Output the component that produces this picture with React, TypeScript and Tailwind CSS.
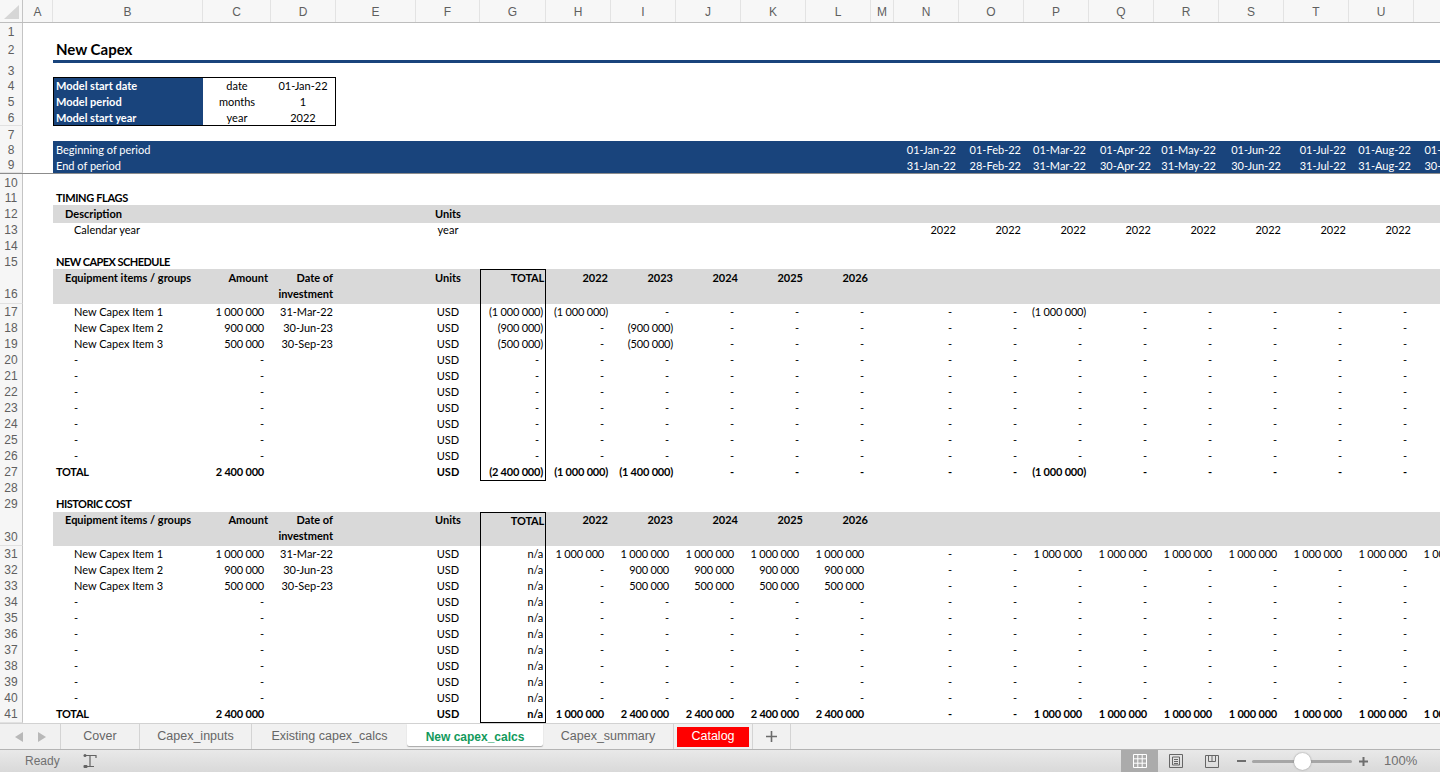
const cellBase = "h-full whitespace-nowrap leading-[16px] min-w-0";

const letters = ["A","B","C","D","E","F","G","H","I","J","K","L","M","N","O","P","Q","R","S","T","U","V"];

type Align = "l" | "c" | "r";
type Cell = { t?: string; a?: Align; pr?: string; pl?: string; cls?: string; sub?: string };
type RowData = {
  n: number;
  h: string;
  fill?: string;
  color?: string;
  bold?: boolean;
  shift?: boolean;
  fixed?: boolean;
  cells?: Record<string, Cell>;
  extra?: string;
};

const DASH = "-";
const tight = "tracking-[-0.2px]";

// accounting style number: positives and dashes sit in from the right, brackets reach the edge
function num(v: string): Cell {
  if (v === DASH) return { t: v, a: "r", pr: "pr-[7px]" };
  if (v.startsWith("(")) return { t: v, a: "r", pr: "pr-[3px]", cls: tight };
  return { t: v, a: "r", pr: "pr-[7px]", cls: tight };
}

const months = ["N","O","P","Q","R","S","T","U","V"];
const years = ["H","I","J","K","L"];

function fillCols(cols: string[], vals: string[]) {
  const out: Record<string, Cell> = {};
  cols.forEach((c, i) => {
    out[c] = num(vals[i] ?? DASH);
  });
  return out;
}

function totalCell(v: string): Cell {
  if (v === DASH) return { t: v, a: "r", pr: "pr-[6px]" };
  return { t: v, a: "r", pr: "pr-[2px]", cls: tight };
}

function dataRow(n: number, label: string, amount: string, date: string, total: string, yrs: string[], mon: string[], bold = false): RowData {
  return {
    n,
    h: "h-[16px]",
    bold,
    cells: {
      B: { t: label, pl: bold ? "pl-[3px]" : "pl-[21px]", cls: bold ? "tracking-[-0.3px]" : "" },
      C: num(amount),
      D: { t: date, a: "r", pr: "pr-[3px]" },
      F: { t: "USD", a: "c" },
      G: totalCell(total),
      ...fillCols(years, yrs),
      ...fillCols(months, mon),
    },
  };
}

const none = (k: number) => Array(k).fill(DASH) as string[];
const repeat = (v: string, k: number) => Array(k).fill(v) as string[];

const capexRows: RowData[] = [
  dataRow(17, "New Capex Item 1", "1 000 000", "31-Mar-22", "(1 000 000)", ["(1 000 000)"], [DASH, DASH, "(1 000 000)"]),
  dataRow(18, "New Capex Item 2", "900 000", "30-Jun-23", "(900 000)", [DASH, "(900 000)"], []),
  dataRow(19, "New Capex Item 3", "500 000", "30-Sep-23", "(500 000)", [DASH, "(500 000)"], []),
  ...[20, 21, 22, 23, 24, 25, 26].map((n) => dataRow(n, DASH, DASH, "", DASH, [], [])),
  dataRow(27, "TOTAL", "2 400 000", "", "(2 400 000)", ["(1 000 000)", "(1 400 000)"], [DASH, DASH, "(1 000 000)"], true),
];

const m = "1 000 000";
const historicRows: RowData[] = [
  dataRow(31, "New Capex Item 1", "1 000 000", "31-Mar-22", "n/a", repeat(m, 5), [DASH, DASH, ...repeat(m, 7)]),
  dataRow(32, "New Capex Item 2", "900 000", "30-Jun-23", "n/a", [DASH, ...repeat("900 000", 4)], []),
  dataRow(33, "New Capex Item 3", "500 000", "30-Sep-23", "n/a", [DASH, ...repeat("500 000", 4)], []),
  ...[34, 35, 36, 37, 38, 39, 40].map((n) => dataRow(n, DASH, DASH, "", "n/a", none(5), none(9))),
  dataRow(41, "TOTAL", "2 400 000", "", "n/a", [m, ...repeat("2 400 000", 4)], [DASH, DASH, ...repeat(m, 7)], true),
];

function headerCells(): Record<string, Cell> {
  const yearCells: Record<string, Cell> = {};
  ["2022", "2023", "2024", "2025", "2026"].forEach((y, i) => {
    yearCells[years[i]] = { t: y, a: "r", pr: "pr-[3px]" };
  });
  return {
    B: { t: "Equipment items / groups", pl: "pl-[12px]" },
    C: { t: "Amount", a: "r", pr: "pr-[3px]" },
    D: { t: "Date of", sub: "investment", a: "r", pr: "pr-[3px]" },
    F: { t: "Units", a: "c" },
    G: { t: "TOTAL", a: "r", pr: "pr-[1px]", cls: "tracking-[-0.2px]" },
    ...yearCells,
  };
}

const dates: [string, string][] = [
  ["01-Jan-22", "31-Jan-22"],
  ["01-Feb-22", "28-Feb-22"],
  ["01-Mar-22", "31-Mar-22"],
  ["01-Apr-22", "30-Apr-22"],
  ["01-May-22", "31-May-22"],
  ["01-Jun-22", "30-Jun-22"],
  ["01-Jul-22", "31-Jul-22"],
  ["01-Aug-22", "31-Aug-22"],
  ["01-Sep-22", "30-Sep-22"],
];

function dateCells(idx: 0 | 1): Record<string, Cell> {
  const out: Record<string, Cell> = {};
  months.forEach((c, i) => {
    out[c] = { t: dates[i][idx], a: "r", pr: "pr-[3px]" };
  });
  return out;
}

function yearFlagCells(): Record<string, Cell> {
  const out: Record<string, Cell> = {};
  months.forEach((c) => {
    out[c] = { t: "2022", a: "r", pr: "pr-[3px]" };
  });
  return out;
}

const boxL = "border-l border-black";
const blue = "bg-[#19447c]";
const gray = "bg-[#d9d9d9]";
const caps = "tracking-[-0.35px]";

const rows: RowData[] = [
  { n: 1, h: "h-[15px]" },
  { n: 2, h: "h-[24px]", bold: true, cells: { B: { t: "New Capex", pl: "pl-[3px]", cls: "text-[15px] leading-[22px]" } }, extra: "title" },
  { n: 3, h: "h-[15px]" },
  {
    n: 4, h: "h-[16px]",
    cells: {
      B: { t: "Model start date", pl: "pl-[2px]", cls: `${blue} text-white font-bold ${boxL} border-t` },
      C: { t: "date", a: "c", cls: "border-t border-black" },
      D: { t: "01-Jan-22", a: "c", cls: "border-t border-r border-black" },
    },
  },
  {
    n: 5, h: "h-[16px]", shift: true,
    cells: {
      B: { t: "Model period", pl: "pl-[2px]", cls: `${blue} text-white font-bold ${boxL}` },
      C: { t: "months", a: "c" },
      D: { t: "1", a: "c", cls: "border-r border-black" },
    },
  },
  {
    n: 6, h: "h-[17px]", shift: true, fixed: true,
    cells: {
      B: { t: "Model start year", pl: "pl-[2px]", cls: `${blue} text-white font-bold ${boxL} border-b` },
      C: { t: "year", a: "c", cls: "border-b border-black" },
      D: { t: "2022", a: "c", cls: "border-b border-r border-black" },
    },
  },
  { n: 7, h: "h-[15px]" },
  { n: 8, h: "h-[16px]", shift: true, fill: blue, color: "text-white", cells: { B: { t: "Beginning of period", pl: "pl-[3px]" }, ...dateCells(0) } },
  { n: 9, h: "h-[17px]", shift: true, fixed: true, fill: blue, color: "text-white", cells: { B: { t: "End of period", pl: "pl-[3px]" }, ...dateCells(1) }, extra: "pane" },
  { n: 10, h: "h-[15px]" },
  { n: 11, h: "h-[16px]", shift: true, bold: true, cells: { B: { t: "TIMING FLAGS", pl: "pl-[3px]", cls: caps } } },
  { n: 12, h: "h-[16px]", shift: true, bold: true, fill: gray, cells: { B: { t: "Description", pl: "pl-[12px]" }, F: { t: "Units", a: "c" } } },
  { n: 13, h: "h-[16px]", shift: true, cells: { B: { t: "Calendar year", pl: "pl-[21px]" }, F: { t: "year", a: "c" }, ...yearFlagCells() } },
  { n: 14, h: "h-[16px]" },
  { n: 15, h: "h-[16px]", shift: true, bold: true, cells: { B: { t: "NEW CAPEX SCHEDULE", pl: "pl-[3px]", cls: "tracking-[-0.55px]" } } },
  { n: 16, h: "h-[35px]", shift: true, bold: true, fill: gray, cells: headerCells(), extra: "boxTop" },
  ...capexRows.map((r, i) => ({ ...r, extra: i === capexRows.length - 1 ? "boxBottom" : "boxMid" })),
  { n: 28, h: "h-[16px]" },
  { n: 29, h: "h-[16px]", bold: true, cells: { B: { t: "HISTORIC COST", pl: "pl-[3px]", cls: "tracking-[-0.5px]" } } },
  { n: 30, h: "h-[34px]", bold: true, fill: gray, cells: headerCells(), extra: "boxTop" },
  ...historicRows.map((r, i) => ({ ...r, extra: i === historicRows.length - 1 ? "boxBottom" : "boxMid" })),
];

function SheetRow({ row }: { row: RowData }) {
  const gBorder =
    row.extra === "boxTop"
      ? "border-t border-x border-black"
      : row.extra === "boxMid"
        ? "border-x border-black"
        : row.extra === "boxBottom"
          ? "border-x border-b border-black"
          : "";
  const paneLine = row.extra === "pane" ? "border-b border-[#8c8c8c]" : "";
  const titleLine = row.extra === "title";
  const tall = row.h === "h-[35px]" || row.h === "h-[34px]";
  const numberPad = tall ? (row.n === 16 ? "pb-px" : "") : row.n < 16 && row.n !== 2 ? "pt-[2px]" : "pt-px";
  return (
    <div className={`grid grid-cols-[23px_30px_150px_68px_65px_80px_64px_66px_65px_65px_65px_65px_65px_23px_65px_65px_65px_65px_65px_65px_65px_65px_65px] w-[1479px] box-border ${row.h} ${paneLine} ${row.fixed ? "grid-rows-1" : ""}`}>
      <div className={`flex justify-center border-b border-r border-b-[#e1e1e1] border-r-[#c4c4c4] bg-[#f6f6f6] text-[12px] leading-[15px] text-[#5f5f5f] [font-family:'Liberation_Sans',sans-serif] ${tall ? "items-end" : "items-center"} ${numberPad}`}>
        {row.n}
      </div>
      {letters.map((col, i) => {
        const c = row.cells?.[col];
        const align = c?.a === "r" ? "text-right" : c?.a === "c" ? "text-center" : "text-left";
        const fill = i > 0 ? row.fill ?? "" : "";
        const g = col === "G" && row.extra === "boxTop";
        return (
          <div
            key={col}
            className={`${cellBase} ${align} ${fill} ${row.color ?? "text-black"} ${row.bold ? "font-bold" : ""} ${row.shift && !g ? "pt-px" : ""} ${c?.pr ?? ""} ${c?.pl ?? ""} ${c?.cls ?? ""} ${col === "G" ? gBorder : ""} ${titleLine && i > 0 ? "border-b-[3px] border-[#19447c]" : ""}`}
          >
            {c?.t}
            {c?.sub && <div>{c.sub}</div>}
          </div>
        );
      })}
    </div>
  );
}

function ColumnHeader() {
  return (
    <div className="grid grid-cols-[23px_30px_150px_68px_65px_80px_64px_66px_65px_65px_65px_65px_65px_23px_65px_65px_65px_65px_65px_65px_65px_65px_65px] w-[1479px] h-[23px] border-b border-[#bdbdbd] bg-[#f7f7f7] [font-family:'Liberation_Sans',sans-serif] text-[12px] text-[#5f5f5f]">
      <div className="flex items-end justify-end border-r border-[#c4c4c4] pr-[3px] pb-[3px]">
        <svg width="15" height="14" viewBox="0 0 15 14">
          <path d="M15 0V14H0Z" fill="#d6d6d6" />
        </svg>
      </div>
      {letters.map((l) => (
        <div key={l} className="flex items-center justify-center border-r border-[#e3e3e3] pt-px">
          {l}
        </div>
      ))}
    </div>
  );
}

function TabBar() {
  const tabCls = "flex items-center justify-center h-full border-r border-[#d4d4d4] text-[#666666]";
  return (
    <div className="flex h-[27px] shrink-0 border-y border-t-[#d2d2d2] border-b-[#b4b4b4] bg-[#f1f1f1] [font-family:'Liberation_Sans',sans-serif] text-[12.5px]">
      <div className="flex w-[61px] items-center justify-center gap-[15px] border-r border-[#d4d4d4]">
        <svg width="8" height="10" viewBox="0 0 8 10"><path d="M8 0V10L0 5Z" fill="#b8b8b8" /></svg>
        <svg width="8" height="10" viewBox="0 0 8 10"><path d="M0 0V10L8 5Z" fill="#b8b8b8" /></svg>
      </div>
      <div className={`${tabCls} w-[79px]`}>Cover</div>
      <div className={`${tabCls} w-[112px]`}>Capex_inputs</div>
      <div className={`${tabCls} w-[155px] border-r-0`}>Existing capex_calcs</div>
      <div className="flex h-[22px] w-[136px] items-center justify-center rounded-b-[2px] bg-white pt-[3px] text-[12px] font-bold text-[#129a5c] shadow-[0_1px_1px_#a8a8a8]">
        New capex_calcs
      </div>
      <div className={`${tabCls} w-[131px]`}>Capex_summary</div>
      <div className="flex w-[79px] items-center justify-center border-r border-[#d4d4d4] pr-[3px] pl-[3px]">
        <div className="flex h-[20px] w-[72px] items-center justify-center bg-[#ff0000] text-white">Catalog</div>
      </div>
      <div className={`${tabCls} w-[38px]`}>
        <svg width="11" height="11" viewBox="0 0 11 11"><path d="M5.5 0V11M0 5.5H11" stroke="#6b6b6b" strokeWidth="1.6" /></svg>
      </div>
    </div>
  );
}

function StatusBar() {
  return (
    <div className="flex h-[22px] shrink-0 items-center bg-gradient-to-b from-[#e9e9e9] to-[#d9d9d9] [font-family:'Liberation_Sans',sans-serif] text-[12px] text-[#707070]">
      <span className="ml-[25px]">Ready</span>
      <svg className="ml-[22px]" width="16" height="16" viewBox="0 0 16 16" fill="none" stroke="#636363" strokeWidth="1.2">
        <path d="M3 2.5H14V5M8 2.5V13.5M3 13.5H12" />
        <circle cx="3" cy="2.5" r="1.5" fill="#636363" stroke="none" />
        <rect x="1.5" y="12" width="4" height="3" rx="1" fill="#636363" stroke="none" />
      </svg>
      <div className="flex-1" />
      <div className="flex h-full w-[37px] items-center justify-center bg-[#ababab]">
        <svg width="14" height="14" viewBox="0 0 14 14" fill="none" stroke="#ffffff" strokeWidth="1">
          <path d="M.5.5H13.5V13.5H.5ZM.5 4.8H13.5M.5 9.2H13.5M4.8.5V13.5M9.2.5V13.5" />
        </svg>
      </div>
      <div className="flex h-full w-[36px] items-center justify-center">
        <svg width="14" height="14" viewBox="0 0 14 14" fill="none" stroke="#666666" strokeWidth="1">
          <path d="M.5.5H13.5V13.5H.5Z" />
          <path d="M3.5 3H10.5V11H3.5ZM5 5.5H9M5 7.5H9M5 9.5H9" />
        </svg>
      </div>
      <div className="flex h-full w-[36px] items-center justify-center">
        <svg width="14" height="13" viewBox="0 0 14 13" fill="none" stroke="#666666" strokeWidth="1">
          <path d="M.5.5H13.5V12.5H.5ZM7 .5V6.5M3.5 .5V6.5H10.5V.5" />
        </svg>
      </div>
      <svg className="ml-[7px]" width="9" height="2" viewBox="0 0 9 2"><path d="M0 1H9" stroke="#6e6e6e" strokeWidth="2" /></svg>
      <div className="relative ml-[6px] h-[3px] w-[100px] rounded-full bg-[#a6a6a6]">
        <div className="absolute left-[42px] top-[-7px] h-[17px] w-[17px] rounded-full bg-white shadow-[0_0_2px_#8a8a8a]" />
      </div>
      <svg className="ml-[7px]" width="9" height="9" viewBox="0 0 9 9"><path d="M4.5 0V9M0 4.5H9" stroke="#6e6e6e" strokeWidth="2" /></svg>
      <span className="ml-[16px] mr-[24px] w-[32px] text-[13px]">100%</span>
    </div>
  );
}

export default function App() {
  return (
    <div className="flex h-[772px] w-[1440px] flex-col overflow-hidden bg-white [font-family:Lato,sans-serif] text-[11px]">
      <div className="flex-1 overflow-hidden">
        <ColumnHeader />
        {rows.map((row) => (
          <SheetRow key={row.n} row={row} />
        ))}
      </div>
      <TabBar />
      <StatusBar />
    </div>
  );
}
